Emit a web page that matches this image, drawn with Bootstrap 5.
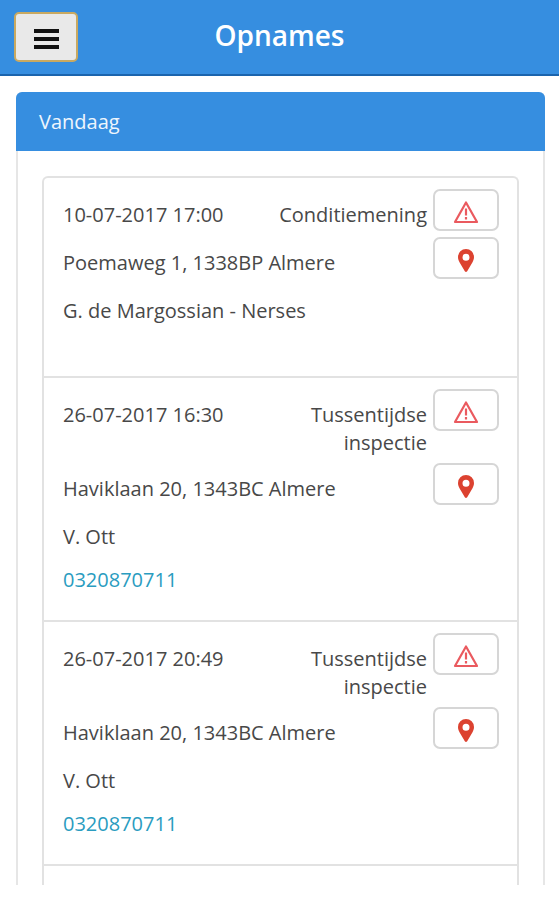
<!DOCTYPE html>
<html lang="nl">
<head>
<meta charset="utf-8">
<meta name="viewport" content="width=device-width, initial-scale=1">
<title>Opnames</title>
<link href="https://cdn.jsdelivr.net/npm/bootstrap@5.3.0/dist/css/bootstrap.min.css" rel="stylesheet">
<style>
  body { font-family: "Open Sans", sans-serif; font-size: 20px; line-height: 28px; color: #484848; background: #fff; }
  .app-bar { display: grid; grid-template-columns: 64px 1fr 64px; align-items: center; padding: 12px 14px; background: #368ee0; border-bottom: 2px solid #1b64ad; }
  .app-title { font-size: 28px; line-height: 36px; font-weight: 600; color: #fff; padding-bottom: 4px; }
  .menu-btn { width: 64px; height: 50px; padding: 4px 0 0; background: #e9e9e9; border: 2px solid #c9a961; border-radius: 5px; color: #111; }
  .day-card { margin: 16px 14px 0 16px; border: 2px solid #e6e6e6; border-bottom: 0; border-radius: 6px 6px 0 0; }
  .day-head { margin: -2px -2px 0; padding: 16px 23px 15px; font-size: 20px; line-height: 28px; background: #368ee0; color: #eef6fd; border: 0; }
  .card-header.day-head:first-child { border-radius: 6px 6px 0 0; }
  .day-body { padding: 25px 24px 0; }
  .visit-list { border: 2px solid #e2e2e2; border-bottom: 0; border-radius: 6px 6px 0 0; }
  .visit-list > .visit { padding: 11px 18px 26px 19px; border: 0; border-bottom: 2px solid #e2e2e2; color: inherit; background: #fff; }
  .visit-first { min-height: 200px; }
  .visit-list > .visit-next { padding: 10px 0 9px; border-bottom: 0; }
  .visit-row { gap: 6px; margin-bottom: 6px; }
  .visit-text { padding-top: 12px; }
  .visit-btn { width: 66px; height: 42px; padding: 4px 0 0; background: #fff; border: 2px solid #d6d6d6; border-radius: 7px; }
  .visit-name { padding-top: 12px; margin-bottom: 15px; }
  .phone { color: #2a9cc0; }
</style>
</head>
<body>
<svg class="d-none" aria-hidden="true">
  <symbol id="warn" viewBox="0 0 26 24"><path d="M13 2.5 24 22H2Z" fill="none" stroke="#ea5a5f" stroke-width="2.2" stroke-linejoin="round"/><path d="M13 8.500V15.500M13 17V19.400" stroke="#ea5a5f" stroke-width="2.200"/></symbol>
  <symbol id="pin" viewBox="0 0 16 23"><path fill="#dc4230" fill-rule="evenodd" d="M8 0a8 8 0 0 0-8 8c0 2 .7 3.600 1.500 5.200L6.800 22.200q1.200 1.500 2.400 0L14.500 13.200C15.300 11.600 16 10 16 8a8 8 0 0 0-8-8Zm0 4.800a3.500 3.500 0 1 1 0 7 3.500 3.500 0 0 1 0-7Z"/></symbol>
</svg>
<header class="app-bar">
  <button class="menu-btn d-flex align-items-center justify-content-center" type="button" aria-label="Menu">
    <svg width="25" height="20" viewBox="0 0 25 20" fill="currentColor"><path d="M0 0h25v4H0zM0 8h25v4H0zM0 16h25v4H0z"/></svg>
  </button>
  <h1 class="app-title m-0 text-center">Opnames</h1>
</header>
<main>
  <section class="card day-card">
    <h2 class="card-header day-head">Vandaag</h2>
    <div class="day-body">
      <ul class="list-group list-group-flush visit-list">
        <li class="list-group-item visit visit-first">
          <div class="visit-row d-flex align-items-start">
            <div class="visit-text flex-grow-1 row g-0">
              <div class="col-6">10-07-2017 17:00</div>
              <div class="col-6 text-end">Conditiemening</div>
            </div>
            <button class="visit-btn flex-shrink-0 d-flex align-items-center justify-content-center" type="button" aria-label="Waarschuwing"><svg width="26" height="24"><use href="#warn"/></svg></button>
          </div>
          <div class="visit-row d-flex align-items-start">
            <div class="visit-text flex-grow-1">Poemaweg 1, 1338BP Almere</div>
            <button class="visit-btn flex-shrink-0 d-flex align-items-center justify-content-center" type="button" aria-label="Kaart"><svg width="16" height="23"><use href="#pin"/></svg></button>
          </div>
          <p class="visit-name">G. de Margossian - Nerses</p>
        </li>
        <li class="list-group-item visit">
          <div class="visit-row d-flex align-items-start">
            <div class="visit-text flex-grow-1 row g-0">
              <div class="col-6">26-07-2017 16:30</div>
              <div class="col-6 text-end">Tussentijdse inspectie</div>
            </div>
            <button class="visit-btn flex-shrink-0 d-flex align-items-center justify-content-center" type="button" aria-label="Waarschuwing"><svg width="26" height="24"><use href="#warn"/></svg></button>
          </div>
          <div class="visit-row d-flex align-items-start">
            <div class="visit-text flex-grow-1">Haviklaan 20, 1343BC Almere</div>
            <button class="visit-btn flex-shrink-0 d-flex align-items-center justify-content-center" type="button" aria-label="Kaart"><svg width="16" height="23"><use href="#pin"/></svg></button>
          </div>
          <p class="visit-name">V. Ott</p>
          <a class="phone d-block text-decoration-none" href="tel:0320870711">0320870711</a>
        </li>
        <li class="list-group-item visit">
          <div class="visit-row d-flex align-items-start">
            <div class="visit-text flex-grow-1 row g-0">
              <div class="col-6">26-07-2017 20:49</div>
              <div class="col-6 text-end">Tussentijdse inspectie</div>
            </div>
            <button class="visit-btn flex-shrink-0 d-flex align-items-center justify-content-center" type="button" aria-label="Waarschuwing"><svg width="26" height="24"><use href="#warn"/></svg></button>
          </div>
          <div class="visit-row d-flex align-items-start">
            <div class="visit-text flex-grow-1">Haviklaan 20, 1343BC Almere</div>
            <button class="visit-btn flex-shrink-0 d-flex align-items-center justify-content-center" type="button" aria-label="Kaart"><svg width="16" height="23"><use href="#pin"/></svg></button>
          </div>
          <p class="visit-name">V. Ott</p>
          <a class="phone d-block text-decoration-none" href="tel:0320870711">0320870711</a>
        </li>
        <li class="list-group-item visit visit-next"></li>
      </ul>
    </div>
  </section>
</main>
<script src="https://cdn.jsdelivr.net/npm/bootstrap@5.3.0/dist/js/bootstrap.bundle.min.js"></script>
</body>
</html>
